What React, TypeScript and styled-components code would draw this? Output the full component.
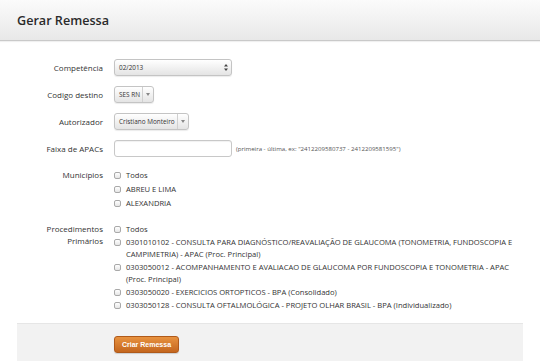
import React from 'react';
import styled, { createGlobalStyle } from 'styled-components';

const GlobalStyle = createGlobalStyle`
  html, body {
    margin: 0;
    padding: 0;
    background: #ffffff;
    font-family: 'Open Sans', 'DejaVu Sans', sans-serif;
    color: #333333;
    overflow: hidden;
  }
`;

const Page = styled.div`
  width: 540px;
  height: 361px;
  overflow: hidden;
`;

const Header = styled.header`
  height: 40px;
  display: flex;
  align-items: center;
  padding: 0 17px;
  background: linear-gradient(#fbfbfb, #e8e8e8);
  border-bottom: 1px solid #c9c9c9;
  box-shadow: 0 1px 1px rgba(0, 0, 0, 0.06);
`;

const Title = styled.h1`
  margin: 0;
  font-size: 12.6px;
  font-weight: 600;
  color: #2a2a2a;
`;

const Content = styled.section`
  padding: 18px 17px 0;
`;

const FormRow = styled.div<{ $gap?: number }>`
  display: grid;
  grid-template-columns: 86px 1fr;
  column-gap: 11px;
  align-items: ${({ $gap }) => ($gap === undefined ? 'center' : 'start')};
  margin-bottom: ${({ $gap }) => ($gap ?? 10)}px;
`;

const Label = styled.label<{ $middle?: boolean }>`
  font-size: 8px;
  line-height: 12px;
  text-align: right;
  color: #333;
  align-self: ${({ $middle }) => ($middle ? 'center' : 'auto')};
`;

const Controls = styled.div`
  display: flex;
  align-items: center;
  gap: 4px;
`;

const SelectBox = styled.div<{ $width: number }>`
  width: ${({ $width }) => $width}px;
  height: 17px;
  box-sizing: border-box;
  display: flex;
  align-items: stretch;
  border: 1px solid #c4c4c4;
  border-radius: 3px;
  background: linear-gradient(#ffffff, #e4e4e4);
  box-shadow: 0 1px 1px rgba(0, 0, 0, 0.08);
  font-size: 6.4px;
  color: #333;
`;

const SelectText = styled.span`
  flex: 1;
  display: flex;
  align-items: center;
  padding-left: 4px;
  white-space: nowrap;
  overflow: hidden;
`;

const SelectArrow = styled.span<{ $split?: boolean }>`
  width: 10px;
  flex: none;
  display: flex;
  align-items: center;
  justify-content: center;
  border-left: ${({ $split }) => ($split ? '1px solid #d0d0d0' : 'none')};
`;

const TextInput = styled.input`
  width: 118px;
  height: 17px;
  box-sizing: border-box;
  margin: 0;
  border: 1px solid #c8c8c8;
  border-radius: 3px;
  background: #fff;
  box-shadow: inset 0 1px 1px rgba(0, 0, 0, 0.06);
`;

const Hint = styled.span`
  font-size: 6.1px;
  color: #555;
  white-space: nowrap;
`;

const CheckList = styled.div`
  display: flex;
  flex-direction: column;
`;

const CheckItem = styled.div<{ $space: number }>`
  display: flex;
  align-items: flex-start;
  gap: 5px;
  margin-bottom: ${({ $space }) => $space}px;
  font-size: 7.6px;
  line-height: 12px;
  color: #333;
`;

const Box = styled.span`
  flex: none;
  width: 7px;
  height: 7px;
  margin-top: 2.5px;
  box-sizing: border-box;
  border: 1px solid #a9a9a9;
  border-radius: 2px;
  background: linear-gradient(#ffffff, #e6e6e6);
`;

const FormActions = styled.div`
  display: flex;
  align-items: flex-start;
  margin-top: 11px;
  padding: 12px 0 20px 97px;
  background: #f2f2f2;
  border-top: 1px solid #e6e6e6;
`;

const PrimaryButton = styled.button`
  height: 17px;
  padding: 0 7px;
  border: 1px solid #b05a1a;
  border-radius: 3px;
  background: linear-gradient(#e8923f, #c4661e);
  color: #fff;
  font-family: 'Liberation Sans', Arial, sans-serif;
  font-size: 7px;
  font-weight: 700;
  box-shadow: 0 1px 1px rgba(0, 0, 0, 0.15);
`;

const municipios = ['Todos', 'ABREU E LIMA', 'ALEXANDRIA'];

const procedimentos = [
  'Todos',
  '0301010102 - CONSULTA PARA DIAGNÓSTICO/REAVALIAÇÃO DE GLAUCOMA (TONOMETRIA, FUNDOSCOPIA E CAMPIMETRIA) - APAC (Proc. Principal)',
  '0303050012 - ACOMPANHAMENTO E AVALIACAO DE GLAUCOMA POR FUNDOSCOPIA E TONOMETRIA - APAC (Proc. Principal)',
  '0303050020 - EXERCICIOS ORTOPTICOS - BPA (Consolidado)',
  '0303050128 - CONSULTA OFTALMOLÓGICA - PROJETO OLHAR BRASIL - BPA (Individualizado)',
];

const UpDown = () => (
  <svg width='4' height='7' viewBox='0 0 4 7'>
    <path d='M2 0 L4 2.6 H0 Z M2 7 L0 4.4 H4 Z' fill='#444' />
  </svg>
);

const Down = () => (
  <svg width='4' height='3' viewBox='0 0 4 3'>
    <path d='M0 0 H4 L2 3 Z' fill='#888' />
  </svg>
);

const App = () => {
  return (
    <Page>
      <GlobalStyle />
      <Header>
        <Title>Gerar Remessa</Title>
      </Header>
      <Content>
        <FormRow>
          <Label>Competência</Label>
          <Controls>
            <SelectBox $width={118}>
              <SelectText>02/2013</SelectText>
              <SelectArrow>
                <UpDown />
              </SelectArrow>
            </SelectBox>
          </Controls>
        </FormRow>
        <FormRow>
          <Label>Codigo destino</Label>
          <Controls>
            <SelectBox $width={40}>
              <SelectText>SES RN</SelectText>
              <SelectArrow $split>
                <Down />
              </SelectArrow>
            </SelectBox>
          </Controls>
        </FormRow>
        <FormRow>
          <Label>Autorizador</Label>
          <Controls>
            <SelectBox $width={75}>
              <SelectText>Cristiano Monteiro</SelectText>
              <SelectArrow $split>
                <Down />
              </SelectArrow>
            </SelectBox>
          </Controls>
        </FormRow>
        <FormRow $gap={12}>
          <Label $middle>Faixa de APACs</Label>
          <Controls>
            <TextInput />
            <Hint>(primeira - última, ex: "2412209580737 - 2412209581595")</Hint>
          </Controls>
        </FormRow>
        <FormRow $gap={12}>
          <Label>Municípios</Label>
          <CheckList>
            {municipios.map((m) => (
              <CheckItem key={m} $space={2}>
                <Box />
                <span>{m}</span>
              </CheckItem>
            ))}
          </CheckList>
        </FormRow>
        <FormRow $gap={0}>
          <Label>
            Procedimentos
            <br />
            Primários
          </Label>
          <CheckList>
            {procedimentos.map((p) => (
              <CheckItem key={p} $space={1}>
                <Box />
                <span>{p}</span>
              </CheckItem>
            ))}
          </CheckList>
        </FormRow>
        <FormActions>
          <PrimaryButton>Criar Remessa</PrimaryButton>
        </FormActions>
      </Content>
    </Page>
  );
};

export default App;
